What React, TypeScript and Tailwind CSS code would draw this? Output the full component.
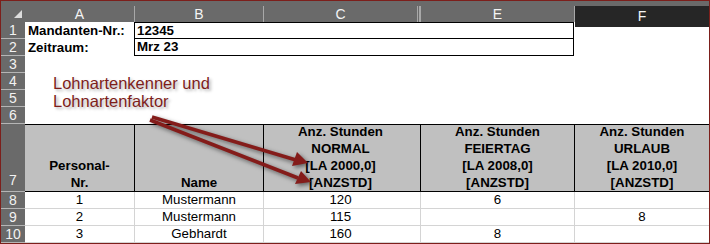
import React from "react";

const F = { fontFamily: '"Liberation Sans", Arial, sans-serif' };

function RH({ n, h, bottom }: { n: string; h: string; bottom?: boolean }) {
  return (
    <div
      className={`w-[24px] ${h} shrink-0 bg-[#6a6a6a] text-[#f2f2f2] text-[14px] flex justify-center border-b border-[#b5b5b5] ${bottom ? "items-end" : "items-center"}`}
    >
      {n}
    </div>
  );
}

function ColH({ w, label, first }: { w: string; label: string; first?: boolean }) {
  return (
    <div className={`${w} h-full shrink-0 pt-[5px]`}>
      <div className={`h-full flex items-center justify-center text-[14px] text-[#f4f4f4] ${first ? "" : "border-l border-[#a8a8a8]"}`}>
        {label}
      </div>
    </div>
  );
}

export default function App() {
  const dataRows = [
    ["8", "1", "Mustermann", "120", "6", ""],
    ["9", "2", "Mustermann", "115", "", "8"],
    ["10", "3", "Gebhardt", "160", "8", ""],
  ];
  return (
    <div className="w-[710px] h-[244px] bg-white" style={F}>
      <div className="relative w-[710px] h-[244px] border border-[#7c1f1b] overflow-hidden flex flex-col">
        {/* column header */}
        <div className="flex h-[21px] shrink-0 bg-[#6a6a6a]">
          <div className="w-[24px] h-full shrink-0 relative">
            <svg width="24" height="21" className="absolute left-0 top-0">
              <polygon points="21,9 21,17 13,17" fill="#dcdcdc" />
            </svg>
          </div>
          <ColH w="w-[109px]" label="A" first />
          <ColH w="w-[129px]" label="B" />
          <ColH w="w-[154px]" label="C" />
          <div className="w-[3px] h-full shrink-0 pt-[5px]">
            <div className="h-full border-l border-r border-[#a8a8a8]" />
          </div>
          <ColH w="w-[154px]" label="E" />
          <div className="w-[135px] h-full shrink-0 pt-[5px]">
            <div className="h-full flex flex-col border-l border-[#a8a8a8]">
              <div className="flex-1 bg-[#262626] flex items-center justify-center text-[14px] text-[#f4f4f4]">F</div>
              <div className="h-[2px] bg-[#217346]" />
            </div>
          </div>
        </div>

        {/* row 1 */}
        <div className="flex h-[17px] shrink-0">
          <RH n="1" h="h-[17px]" />
          <div className="w-[109px] shrink-0 pl-[3px] text-[13.3px] font-bold text-black flex items-center">Mandanten-Nr.:</div>
          <div className="w-[440px] shrink-0 border-t border-l border-r border-b border-black pl-[2px] text-[13.3px] font-bold text-black flex items-center">12345</div>
          <div className="w-[135px] shrink-0" />
        </div>
        {/* row 2 */}
        <div className="flex h-[17px] shrink-0">
          <RH n="2" h="h-[17px]" />
          <div className="w-[109px] shrink-0 pl-[3px] text-[13.3px] font-bold text-black flex items-center">Zeitraum:</div>
          <div className="w-[440px] shrink-0 border-l border-r border-b border-black pl-[2px] text-[13.3px] font-bold text-black flex items-center">Mrz 23</div>
          <div className="w-[135px] shrink-0" />
        </div>
        {["3", "4", "5", "6"].map((n) => (
          <div key={n} className="flex h-[17px] shrink-0">
            <RH n={n} h="h-[17px]" />
            <div className="flex-1" />
          </div>
        ))}

        {/* row 7 */}
        <div className="flex h-[68px] shrink-0">
          <RH n="7" h="h-[68px]" bottom />
          <div className="flex flex-1 bg-[#c0c0c0] border-t border-b border-black text-[13.3px] font-bold text-black leading-[17px] text-center">
            <div className="w-[109px] shrink-0 flex flex-col justify-end">
              <div>Personal-</div>
              <div>Nr.</div>
            </div>
            <div className="w-[129px] shrink-0 border-l border-black flex flex-col justify-end">
              <div>Name</div>
            </div>
            <div className="w-[154px] shrink-0 border-l border-black flex flex-col justify-end">
              <div>Anz. Stunden</div>
              <div>NORMAL</div>
              <div>[LA 2000,0]</div>
              <div>[ANZSTD]</div>
            </div>
            <div className="w-[3px] shrink-0" />
            <div className="w-[154px] shrink-0 border-l border-black flex flex-col justify-end">
              <div>Anz. Stunden</div>
              <div>FEIERTAG</div>
              <div>[LA 2008,0]</div>
              <div>[ANZSTD]</div>
            </div>
            <div className="w-[135px] shrink-0 border-l border-black flex flex-col justify-end">
              <div>Anz. Stunden</div>
              <div>URLAUB</div>
              <div>[LA 2010,0]</div>
              <div>[ANZSTD]</div>
            </div>
          </div>
        </div>

        {dataRows.map((r) => (
          <div key={r[0]} className="flex h-[17px] shrink-0 text-[13.3px] text-black">
            <RH n={r[0]} h="h-[17px]" />
            <div className="w-[109px] shrink-0 border-b border-[#d4d4d4] flex items-center justify-center">{r[1]}</div>
            <div className="w-[129px] shrink-0 border-b border-l border-[#d4d4d4] flex items-center justify-center">{r[2]}</div>
            <div className="w-[154px] shrink-0 border-b border-l border-[#d4d4d4] flex items-center justify-center">{r[3]}</div>
            <div className="w-[3px] shrink-0 border-b border-[#d4d4d4]" />
            <div className="w-[154px] shrink-0 border-b border-l border-[#d4d4d4] flex items-center justify-center">{r[4]}</div>
            <div className="w-[135px] shrink-0 border-b border-l border-[#d4d4d4] flex items-center justify-center">{r[5]}</div>
          </div>
        ))}

        {/* annotation */}
        <div className="absolute left-[52px] top-[73px] text-[16.5px] leading-[18px] text-[#7e1e1b] [text-shadow:2px_2px_3px_rgba(0,0,0,0.3)]">
          <div>Lohnartenkenner und</div>
          <div>Lohnartenfaktor</div>
        </div>
        <svg
          width="710"
          height="244"
          className="absolute left-[-1px] top-[-1px] pointer-events-none"
          style={{ filter: "drop-shadow(2px 2px 2px rgba(0,0,0,0.5))" }}
        >
          <line x1="152" y1="117" x2="296" y2="160" stroke="#841c1a" strokeWidth="3.5" />
          <polygon points="308,163 292,166 297,152" fill="#841c1a" />
          <line x1="150" y1="120" x2="298" y2="178" stroke="#841c1a" strokeWidth="3.5" />
          <polygon points="311,182 295,184 301,171" fill="#841c1a" />
        </svg>
      </div>
    </div>
  );
}
